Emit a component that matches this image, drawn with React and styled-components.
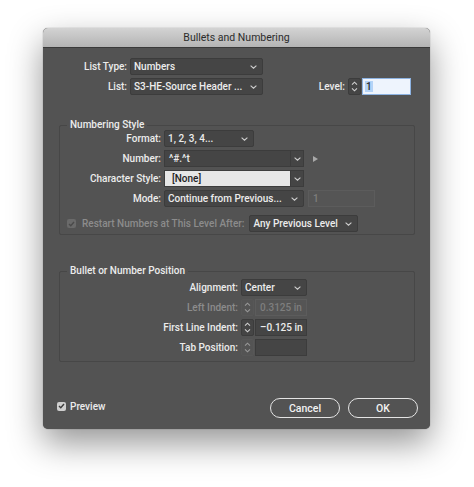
import React from 'react'
import styled, { createGlobalStyle } from 'styled-components'

const GlobalStyle = createGlobalStyle`
  html, body {
    margin: 0;
    background: #ffffff;
    font-family: Roboto, "Liberation Sans", Arial, sans-serif;
  }
`

const colors = {
  body: '#535353',
  field: '#454545',
  fieldBorder: '#3c3c3c',
  text: '#ececec',
  dim: '#8c8c8c',
  groupLine: '#474747',
}

const Page = styled.div`
  padding: 28px 0 0 43px;
  height: 487px;
  box-sizing: border-box;
`

const Dialog = styled.div`
  width: 387px;
  height: 401px;
  display: flex;
  flex-direction: column;
  background: ${colors.body};
  border-radius: 5px;
  overflow: hidden;
  box-shadow: 0 14px 34px rgba(0, 0, 0, 0.42), 0 0 1px rgba(0, 0, 0, 0.6);
`

const TitleBar = styled.div`
  height: 19px;
  line-height: 19px;
  text-align: center;
  font-size: 10.5px;
  color: #2c2c2c;
  background: linear-gradient(#d3d3d3, #b4b4b4);
  border-bottom: 1px solid #3a3a3a;
`

const Body = styled.div`
  flex: 1;
  display: flex;
  flex-direction: column;
  padding-top: 10px;
  font-size: 10px;
  font-weight: 500;
  color: ${colors.text};
`

const Row = styled.div`
  display: flex;
  align-items: center;
  height: 17px;
  gap: 3px;
  margin-top: ${(p) => p.$mt || 0}px;
  padding-left: ${(p) => p.$pl || 0}px;
  padding-right: ${(p) => p.$pr || 0}px;
`

const Label = styled.span`
  width: ${(p) => p.$w}px;
  flex: none;
  text-align: right;
  white-space: nowrap;
  color: ${(p) => (p.$dim ? colors.dim : colors.text)};
`

const Select = styled.div`
  width: ${(p) => p.$w}px;
  height: 17px;
  box-sizing: border-box;
  flex: none;
  display: flex;
  align-items: center;
  justify-content: space-between;
  padding: 0 5px 0 3px;
  background: ${colors.field};
  border: 1px solid ${colors.fieldBorder};
  border-radius: 2px;
  margin-left: ${(p) => p.$ml || 0}px;
  white-space: nowrap;
`

const Combo = styled.div`
  display: flex;
  flex: none;
  height: 17px;
`

const ComboInput = styled.div`
  width: ${(p) => p.$w}px;
  box-sizing: border-box;
  display: flex;
  align-items: center;
  padding-left: ${(p) => (p.$light ? 7 : 4)}px;
  background: ${(p) => (p.$light ? '#e6e6e6' : colors.field)};
  color: ${(p) => (p.$light ? '#222' : colors.text)};
  border: 1px solid ${colors.fieldBorder};
  border-right: none;
`

const ComboButton = styled.div`
  width: 14px;
  box-sizing: border-box;
  display: flex;
  align-items: center;
  justify-content: center;
  background: ${colors.field};
  border: 1px solid ${colors.fieldBorder};
`

const Field = styled.div`
  width: ${(p) => p.$w}px;
  height: 17px;
  box-sizing: border-box;
  flex: none;
  display: flex;
  align-items: center;
  padding-left: 4px;
  margin-left: ${(p) => p.$ml || 0}px;
  background: ${(p) => (p.$disabled ? '#555555' : colors.field)};
  color: ${(p) => (p.$disabled ? '#7e7e7e' : colors.text)};
  border: 1px solid ${(p) => (p.$disabled ? '#5c5c5c' : colors.fieldBorder)};
`

const Spinner = styled.div`
  width: 13px;
  height: 17px;
  box-sizing: border-box;
  flex: none;
  display: flex;
  align-items: center;
  justify-content: center;
  background: ${(p) => (p.$disabled ? '#555555' : colors.field)};
  border: 1px solid ${(p) => (p.$disabled ? '#5c5c5c' : colors.fieldBorder)};
  border-radius: 2px;
  opacity: ${(p) => (p.$disabled ? 0.55 : 1)};
`

const Stepper = styled.div`
  display: flex;
  flex: none;
  gap: 1px;
`

const LevelInput = styled.div`
  width: 49px;
  height: 17px;
  box-sizing: border-box;
  display: flex;
  align-items: center;
  padding-left: 2px;
  background: #eef4fd;
  border: 1px solid #8db3e2;
  color: #2a2a2a;
`

const Selected = styled.span`
  background: #b4d3f7;
  padding: 0 1px;
`

const Level = styled.div`
  display: flex;
  align-items: center;
  gap: 3px;
  margin-left: auto;
`

const Group = styled.fieldset`
  margin: ${(p) => p.$mt}px 15px 0 16px;
  padding: ${(p) => p.$pt}px 0 ${(p) => p.$pb}px 0;
  min-width: 0;
  border: 1px solid ${colors.groupLine};
  border-radius: 2px;
  display: flex;
  flex-direction: column;
  gap: 3px;
`

const Legend = styled.legend`
  margin-left: 7px;
  padding: 0 3px;
  line-height: 10px;
  font-size: 10px;
  color: ${colors.text};
`

const Check = styled.span`
  width: 9px;
  height: 9px;
  flex: none;
  box-sizing: border-box;
  border-radius: 2px;
  display: flex;
  align-items: center;
  justify-content: center;
  background: ${(p) => (p.$disabled ? '#6a6a6a' : '#cfcfcf')};
`

const DimText = styled.span`
  color: ${colors.dim};
  white-space: nowrap;
  margin-left: 3px;
`

const Arrow = styled.span`
  width: 0;
  height: 0;
  margin-left: 6px;
  border-top: 3.5px solid transparent;
  border-bottom: 3.5px solid transparent;
  border-left: 5px solid #a8a8a8;
`

const Footer = styled.div`
  margin-top: auto;
  display: flex;
  align-items: center;
  padding: 0 12px 11px 14px;
`

const Preview = styled.label`
  display: flex;
  align-items: center;
  gap: 4px;
  margin-bottom: 4px;
`

const Buttons = styled.div`
  margin-left: auto;
  display: flex;
  gap: 8px;
`

const Button = styled.div`
  width: 70px;
  height: 20px;
  box-sizing: border-box;
  border: 1.5px solid #e4e4e4;
  border-radius: 10px;
  display: flex;
  align-items: center;
  justify-content: center;
  font-size: 10.5px;
  color: #f2f2f2;
`

const Chevron = () => (
  <svg width="7" height="4" viewBox="0 0 7 4">
    <polyline points="0.6,0.6 3.5,3.2 6.4,0.6" fill="none" stroke="#cfcfcf" strokeWidth="1.1" />
  </svg>
)

const UpDown = () => (
  <svg width="7" height="11" viewBox="0 0 7 11">
    <polyline points="1,3.6 3.5,1.2 6,3.6" fill="none" stroke="#d0d0d0" strokeWidth="1.1" />
    <polyline points="1,7.4 3.5,9.8 6,7.4" fill="none" stroke="#d0d0d0" strokeWidth="1.1" />
  </svg>
)

const Tick = ({ color }) => (
  <svg width="7" height="6" viewBox="0 0 7 6">
    <polyline points="1,3 2.8,4.8 6,1" fill="none" stroke={color} strokeWidth="1.4" />
  </svg>
)

const Dropdown = ({ w, ml, children }) => (
  <Select $w={w} $ml={ml}>
    <span>{children}</span>
    <Chevron />
  </Select>
)

const App = () => {
  return (
    <>
      <GlobalStyle />
      <Page>
        <Dialog>
          <TitleBar>Bullets and Numbering</TitleBar>
          <Body>
            <Row>
              <Label $w={84}>List Type:</Label>
              <Dropdown w={133}>Numbers</Dropdown>
            </Row>
            <Row $mt={3} $pr={19}>
              <Label $w={84}>List:</Label>
              <Dropdown w={133}>S3-HE-Source Header ...</Dropdown>
              <Level>
                <span>Level:</span>
                <Stepper>
                  <Spinner><UpDown /></Spinner>
                  <LevelInput><Selected>1</Selected></LevelInput>
                </Stepper>
              </Level>
            </Row>

            <Group $mt={25} $pt={0} $pb={2}>
              <Legend>Numbering Style</Legend>
              <Row>
                <Label $w={101}>Format:</Label>
                <Dropdown w={90}>1, 2, 3, 4...</Dropdown>
              </Row>
              <Row>
                <Label $w={101}>Number:</Label>
                <Combo>
                  <ComboInput $w={126}>^#.^t</ComboInput>
                  <ComboButton><Chevron /></ComboButton>
                </Combo>
                <Arrow />
              </Row>
              <Row>
                <Label $w={101}>Character Style:</Label>
                <Combo>
                  <ComboInput $w={126} $light>[None]</ComboInput>
                  <ComboButton><Chevron /></ComboButton>
                </Combo>
              </Row>
              <Row>
                <Label $w={101}>Mode:</Label>
                <Dropdown w={140}>Continue from Previous...</Dropdown>
                <Field $w={67} $ml={1} $disabled>1</Field>
              </Row>
              <Row $mt={5} $pl={7}>
                <Check $disabled><Tick color="#4a4a4a" /></Check>
                <DimText>Restart Numbers at This Level After:</DimText>
                <Dropdown w={109} ml={2}>Any Previous Level</Dropdown>
              </Row>
            </Group>

            <Group $mt={31} $pt={3} $pb={5}>
              <Legend>Bullet or Number Position</Legend>
              <Row>
                <Label $w={178}>Alignment:</Label>
                <Dropdown w={66}>Center</Dropdown>
              </Row>
              <Row>
                <Label $w={178} $dim>Left Indent:</Label>
                <Stepper>
                  <Spinner $disabled><UpDown /></Spinner>
                  <Field $w={52} $disabled>0.3125 in</Field>
                </Stepper>
              </Row>
              <Row>
                <Label $w={178}>First Line Indent:</Label>
                <Stepper>
                  <Spinner><UpDown /></Spinner>
                  <Field $w={52}>–0.125 in</Field>
                </Stepper>
              </Row>
              <Row>
                <Label $w={178}>Tab Position:</Label>
                <Stepper>
                  <Spinner $disabled><UpDown /></Spinner>
                  <Field $w={52}></Field>
                </Stepper>
              </Row>
            </Group>

            <Footer>
              <Preview>
                <Check><Tick color="#3c3c3c" /></Check>
                <span>Preview</span>
              </Preview>
              <Buttons>
                <Button>Cancel</Button>
                <Button>OK</Button>
              </Buttons>
            </Footer>
          </Body>
        </Dialog>
      </Page>
    </>
  )
}

export default App
